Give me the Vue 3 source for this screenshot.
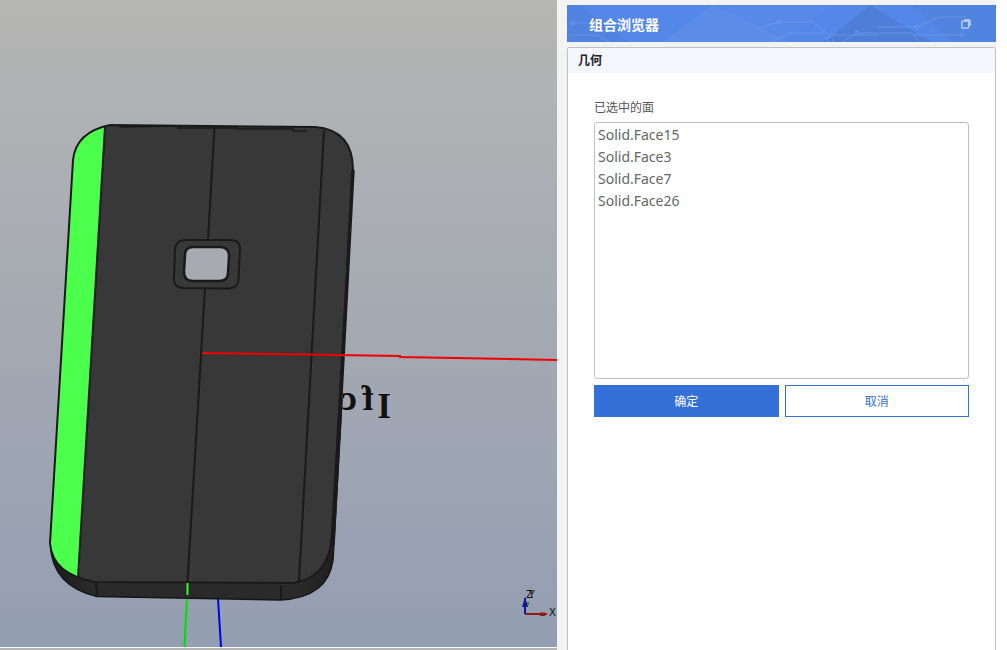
<template>
  <div class="page">
    <section class="viewport">
      <svg class="scene" viewBox="0 0 557 648" width="557" height="648">
        <defs>
          <linearGradient id="bg" x1="0" y1="0" x2="0" y2="1">
            <stop offset="0" stop-color="#b5b5b3" />
            <stop offset="1" stop-color="#949eb2" />
          </linearGradient>
          <linearGradient id="side" x1="0" y1="0" x2="1" y2="0">
            <stop offset="0" stop-color="#1c1c1c" />
            <stop offset="0.15" stop-color="#2a2a2a" />
            <stop offset="0.85" stop-color="#2a2a2a" />
            <stop offset="1" stop-color="#1c1c1c" />
          </linearGradient>
          <clipPath id="faceClip">
            <path :d="facePath" />
          </clipPath>
        </defs>
        <rect width="557" height="647" fill="url(#bg)" />
        <rect y="647" width="557" height="1" fill="#fff" />

        <text class="model-text" transform="translate(391 418) scale(-1 1)"><tspan>I</tspan><tspan dx="4" dy="-8">f</tspan><tspan dx="5">c</tspan></text>

        <line x1="187" y1="596" x2="184.500" y2="647" stroke="#00e000" stroke-width="2" />
        <line x1="218" y1="599" x2="221" y2="647" stroke="#0000f0" stroke-width="2" />

        <path d="M50.500 545 Q52 586 97 596.500 L280 600 Q328 598 333 560 L342 400 L200 400 Z" fill="url(#side)" stroke="#161616" stroke-width="1.500" />
        <path :d="facePath" fill="#383838" />
        <g clip-path="url(#faceClip)">
          <path d="M105 120 L40 120 L40 590 L78 590 Z" fill="#4cff4c" />
        </g>
        <path :d="facePath" fill="none" stroke="#1a1a1a" stroke-width="2" />
        <path d="M353 170 L333 545" fill="none" stroke="#1a1a1a" stroke-width="3.500" />

        <g fill="none" stroke="#1a1a1a" stroke-width="2">
          <path d="M105 127 L78 578" />
          <path d="M214.500 127 L208 240" />
          <path d="M205 288 L187.500 582" />
          <path d="M324 130 L299 581" />
          <path d="M120 125 L120 127 L178 126 L178 128 L238 128 L238 129 L293 129 L293 131 L307 131" stroke-width="1.500" />
          <path d="M96 582 L97 597" />
          <path d="M281 585 L281 600" />
          <path d="M186 240 L230 240 Q240 240 240 249 L238.500 280 Q238 288 228 288.500 L183 288 Q173 287 174 278 L175 249 Q176 240 186 240 Z" />
          <path d="M193 247 L220 247 Q229 247 229 256 L228 273 Q228 281 219 281 L193 281 Q184 281 184 272 L185 255 Q185 247 193 247 Z" fill="#a7aab0" stroke-width="2.500" />
        </g>

        <line x1="187.500" y1="583" x2="187.500" y2="595" stroke="#2bff2b" stroke-width="2" />
        <path d="M202 353 L400 356 L400 357 L557 360" fill="none" stroke="#f00000" stroke-width="2" />

        <g class="axis">
          <line x1="525" y1="614" x2="547" y2="614" stroke="#8f1c1c" stroke-width="2" />
          <line x1="525" y1="614" x2="525" y2="598" stroke="#16169a" stroke-width="2" />
          <path d="M522 607 L525 597 L528 607 Z" fill="#16169a" />
          <rect x="527" y="602" width="2" height="3" fill="#2a8a2a" />
          <path d="M540 612.500 L545 612.500 L545 616 L540 616 Z" fill="#8f1c1c" />
          <text class="axis-label" x="549" y="616">X</text>
          <text class="axis-label axis-stack" x="526" y="598">ZY</text>
        </g>
      </svg>
    </section>

    <aside class="sidebar">
      <header class="banner">
        <svg class="banner-art" viewBox="0 0 429 37" width="429" height="37" preserveAspectRatio="none">
          <path d="M12 0 L62 37 L0 37 L0 0 Z" fill="#000" opacity="0.03" />
          <path d="M145 0 L223 37 L96 37 Z" fill="#fff" opacity="0.04" />
          <path d="M145 0 L265 0 L215 37 Z" fill="#fff" opacity="0.02" />
          <path d="M303 0 L257 37 L364 37 Z" fill="#000" opacity="0.07" />
          <path d="M345 0 L429 0 L429 37 L385 37 Z" fill="#000" opacity="0.03" />
          <g fill="none" stroke="#7da2ee" stroke-width="1" opacity="0.5">
            <path d="M190 24 L212 17 L245 17 L262 30 L310 30" />
            <path d="M205 37 L222 28 L255 28 L262 37" />
            <path d="M275 37 L290 28 L345 28 L352 37" />
            <path d="M310 22 L350 22 L372 12 L400 12" />
            <path d="M345 30 L395 30" />
            <path d="M2 30 L30 30 L42 37" />
            <path d="M2 18 L24 18" />
            <circle cx="212" cy="17" r="2" />
            <circle cx="263" cy="35" r="3" />
            <circle cx="290" cy="28" r="2" />
            <circle cx="350" cy="22" r="2" />
            <circle cx="395" cy="30" r="2" />
            <circle cx="6" cy="18" r="2" />
          </g>
        </svg>
        <span class="banner-title">组合浏览器</span>
        <svg class="restore" viewBox="0 0 10 10" width="10" height="10">
          <rect x="0.800" y="2.200" width="6.800" height="7" rx="1" fill="none" stroke="#c6d6f6" stroke-width="1.300" />
          <path d="M3 1 L8.200 1 Q9.200 1 9.200 2 L9.200 7" fill="none" stroke="#c6d6f6" stroke-width="1.300" />
        </svg>
      </header>

      <div class="panel">
        <div class="panel-head">几何</div>
        <div class="panel-body">
          <label class="field-label">已选中的面</label>
          <ul class="face-list">
            <li v-for="face in faces" :key="face">{{ face }}</li>
          </ul>
          <div class="actions">
            <button class="btn primary">确定</button>
            <button class="btn">取消</button>
          </div>
        </div>
      </div>
    </aside>
  </div>
</template>

<script setup>
const faces = ['Solid.Face15', 'Solid.Face3', 'Solid.Face7', 'Solid.Face26']

const facePath = 'M110 125 L315 127 Q353 130 353 170 L331.500 540 Q327 578 293 583 L95 582 Q52 574 50 543 L73 160 Q76 132 110 125 Z'
</script>

<style>
html, body {
  margin: 0;
  background: #fff;
  overflow: hidden;
}
</style>

<style scoped>
.page {
  display: flex;
  width: 1007px;
  height: 650px;
  overflow: hidden;
  font-family: "Noto Sans", "Noto Sans CJK SC", sans-serif;
}

.viewport {
  width: 557px;
  height: 650px;
  flex: none;
  background: #b4b4b4;
}

.scene {
  display: block;
}

.model-text {
  font-family: "Liberation Serif", serif;
  font-size: 35px;
  font-weight: 700;
  fill: #111;
}

.axis-label {
  font-family: "DejaVu Sans", sans-serif;
  font-size: 10px;
  fill: #111;
}

.axis-stack {
  letter-spacing: -4px;
}

.sidebar {
  width: 439px;
  flex: none;
  background: #f3f3f3;
  padding: 5px 0 0 10px;
  box-sizing: border-box;
  display: flex;
  flex-direction: column;
  gap: 5px;
}

.banner {
  position: relative;
  height: 37px;
  flex: none;
  background: #5488e8;
  display: flex;
  align-items: center;
  justify-content: space-between;
  padding: 0 25px 0 22px;
  overflow: hidden;
}

.banner-art {
  position: absolute;
  left: 0;
  top: 0;
}

.banner-title {
  position: relative;
  color: #fff;
  font-size: 14px;
  font-weight: 700;
}

.restore {
  position: relative;
}

.panel {
  flex: 1;
  background: #fff;
  border: 1px solid #c0c0c0;
  border-bottom: none;
  border-radius: 3px 3px 0 0;
}

.panel-head {
  height: 25px;
  line-height: 25px;
  padding-left: 10px;
  background: #f3f6fe;
  color: #222;
  font-size: 12px;
  font-weight: 700;
}

.panel-body {
  padding: 26px 26px 0;
}

.field-label {
  display: block;
  font-size: 12px;
  color: #555;
  line-height: 17px;
  margin-bottom: 6px;
}

.face-list {
  list-style: none;
  margin: 0;
  padding: 1px 3px;
  height: 253px;
  border: 1px solid #c0c0c0;
  border-radius: 3px;
  color: #666;
  font-size: 14px;
  line-height: 22px;
}

.actions {
  display: flex;
  gap: 6px;
  margin-top: 6px;
}

.btn {
  flex: 1;
  height: 32px;
  padding: 0;
  border: 1px solid #3370d8;
  background: #fff;
  color: #3370d8;
  font-family: inherit;
  font-size: 12px;
}

.btn.primary {
  background: #3370d8;
  color: #fff;
}
</style>
